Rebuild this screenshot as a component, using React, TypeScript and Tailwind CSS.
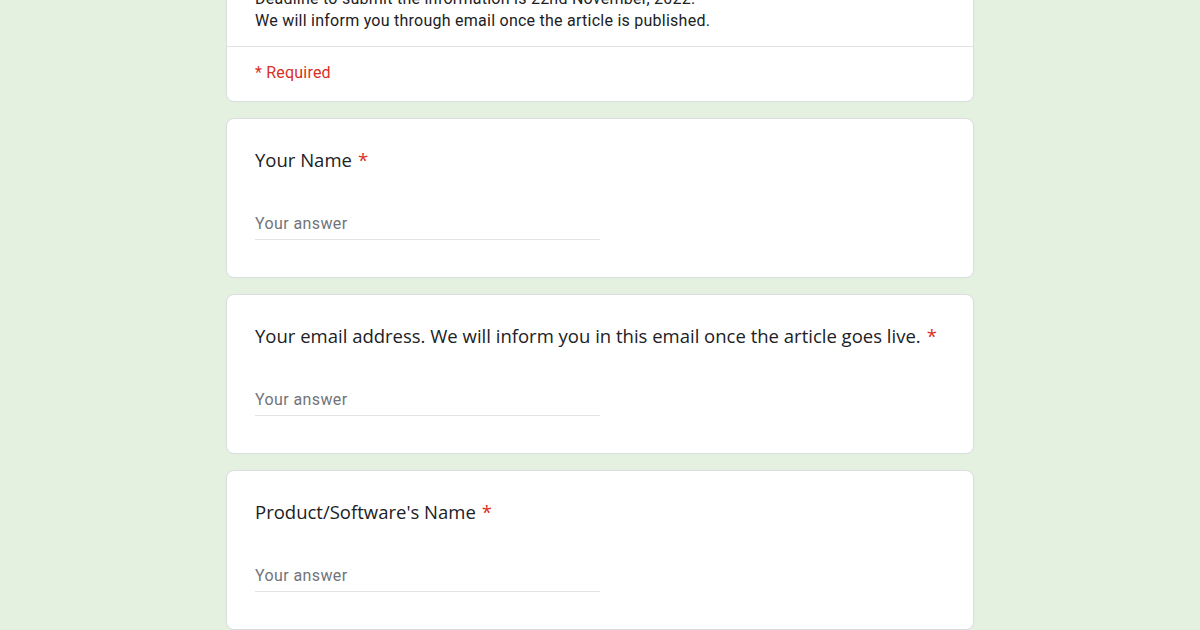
const questions = [
  "Your Name",
  "Your email address. We will inform you in this email once the article goes live.",
  "Product/Software's Name",
];

function QuestionCard({ title }: { title: string }) {
  return (
    <div className="bg-white border border-[#dadce0] rounded-[8px] pt-[27px] pb-[37px] px-[28px]">
      <div className="h-[28px] leading-[28px] text-[18.5px] text-[#202124] font-['Open_Sans',sans-serif]">
        {title}
        <span className="text-[#d93025] ml-[6px]">*</span>
      </div>
      <div className="mt-[39px] w-[345px] border-b border-[#e3e3e3] pb-[4px]">
        <div className="h-[22px] leading-[22px] text-[16px] tracking-[0.4px] text-[#70757a] font-['Roboto',sans-serif]">
          Your answer
        </div>
      </div>
    </div>
  );
}

export default function App() {
  return (
    <div className="w-[1200px] h-[630px] overflow-hidden bg-[#e4f0e0] font-['Roboto',sans-serif]">
      <div className="w-[748px] mx-auto mt-[-41px] flex flex-col gap-[16px]">
        <div className="bg-white border border-[#dadce0] rounded-[8px]">
          <div className="px-[28px] pt-[28px] pb-[14px] text-[16px] leading-[22px] tracking-[0.25px] text-[#202124]">
            <p>Deadline to submit the information is 22nd November, 2022.</p>
            <p>We will inform you through email once the article is published.</p>
          </div>
          <div className="border-t border-[#e3e3e3] px-[28px] pt-[15px] pb-[17px] text-[16px] leading-[22px] tracking-[0.2px] text-[#d93025]">
            * Required
          </div>
        </div>
        {questions.map((q) => (
          <QuestionCard key={q} title={q} />
        ))}
      </div>
    </div>
  );
}
